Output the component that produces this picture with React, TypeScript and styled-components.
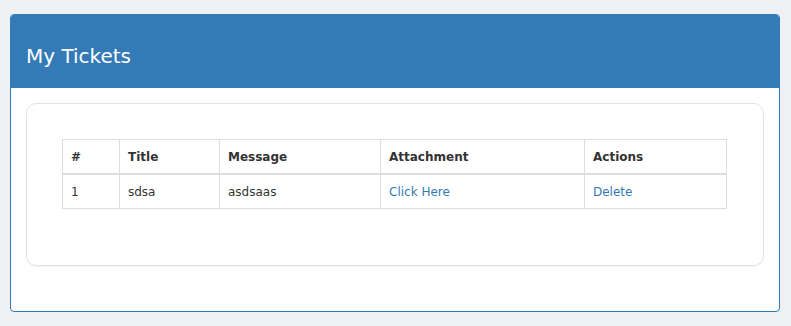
import styled, { createGlobalStyle } from 'styled-components';

const GlobalStyle = createGlobalStyle`
  body {
    margin: 0;
    background: #eef0f4;
    font-family: "DejaVu Sans", Verdana, sans-serif;
    font-size: 12px;
    color: #333;
  }
`;

const Page = styled.div`
  padding: 14px 11px 14px 10px;
`;

const Panel = styled.div`
  background: #fff;
  border: 1px solid #337ab7;
  border-radius: 4px;
`;

const PanelHeading = styled.div`
  background: #337ab7;
  color: #fff;
  padding: 0 15px;
  height: 73px;
  display: flex;
  align-items: center;
  border-radius: 3px 3px 0 0;
`;

const PanelTitle = styled.h3`
  margin: 0;
  padding-top: 9px;
  font-size: 20px;
  font-weight: 400;
`;

const PanelBody = styled.div`
  padding: 15px 15px 45px;
`;

const Well = styled.div`
  border: 1px solid #e3e3e3;
  border-radius: 10px;
  padding: 35px 35px 36px;
  box-shadow: 0 1px 1px rgba(0, 0, 0, 0.05);
`;

const Table = styled.table`
  width: 664px;
  table-layout: fixed;
  border-collapse: collapse;
  margin-bottom: 20px;
  border: 1px solid #ddd;
`;

const Th = styled.th<{ w: number }>`
  box-sizing: border-box;
  width: ${({ w }) => w}px;
  text-align: left;
  font-weight: 700;
  padding: 8px 8px 7px;
  height: 18px;
  border: 1px solid #ddd;
  border-bottom-width: 2px;
  line-height: 18px;
`;

const Td = styled.td`
  padding: 8px 8px 7px;
  border: 1px solid #ddd;
  line-height: 18px;
`;

const Link = styled.a`
  color: #337ab7;
  text-decoration: none;
`;

const columns = [
  { label: '#', w: 57 },
  { label: 'Title', w: 100 },
  { label: 'Message', w: 161 },
  { label: 'Attachment', w: 204 },
  { label: 'Actions', w: 142 },
];

const tickets = [{ id: 1, title: 'sdsa', message: 'asdsaas' }];

export default function App() {
  return (
    <>
      <GlobalStyle />
      <Page>
        <Panel>
          <PanelHeading>
            <PanelTitle>My Tickets</PanelTitle>
          </PanelHeading>
          <PanelBody>
            <Well>
              <Table>
                <thead>
                  <tr>
                    {columns.map((c) => (
                      <Th key={c.label} w={c.w}>{c.label}</Th>
                    ))}
                  </tr>
                </thead>
                <tbody>
                  {tickets.map((t) => (
                    <tr key={t.id}>
                      <Td>{t.id}</Td>
                      <Td>{t.title}</Td>
                      <Td>{t.message}</Td>
                      <Td><Link href="#">Click Here</Link></Td>
                      <Td><Link href="#">Delete</Link></Td>
                    </tr>
                  ))}
                </tbody>
              </Table>
            </Well>
          </PanelBody>
        </Panel>
      </Page>
    </>
  );
}
